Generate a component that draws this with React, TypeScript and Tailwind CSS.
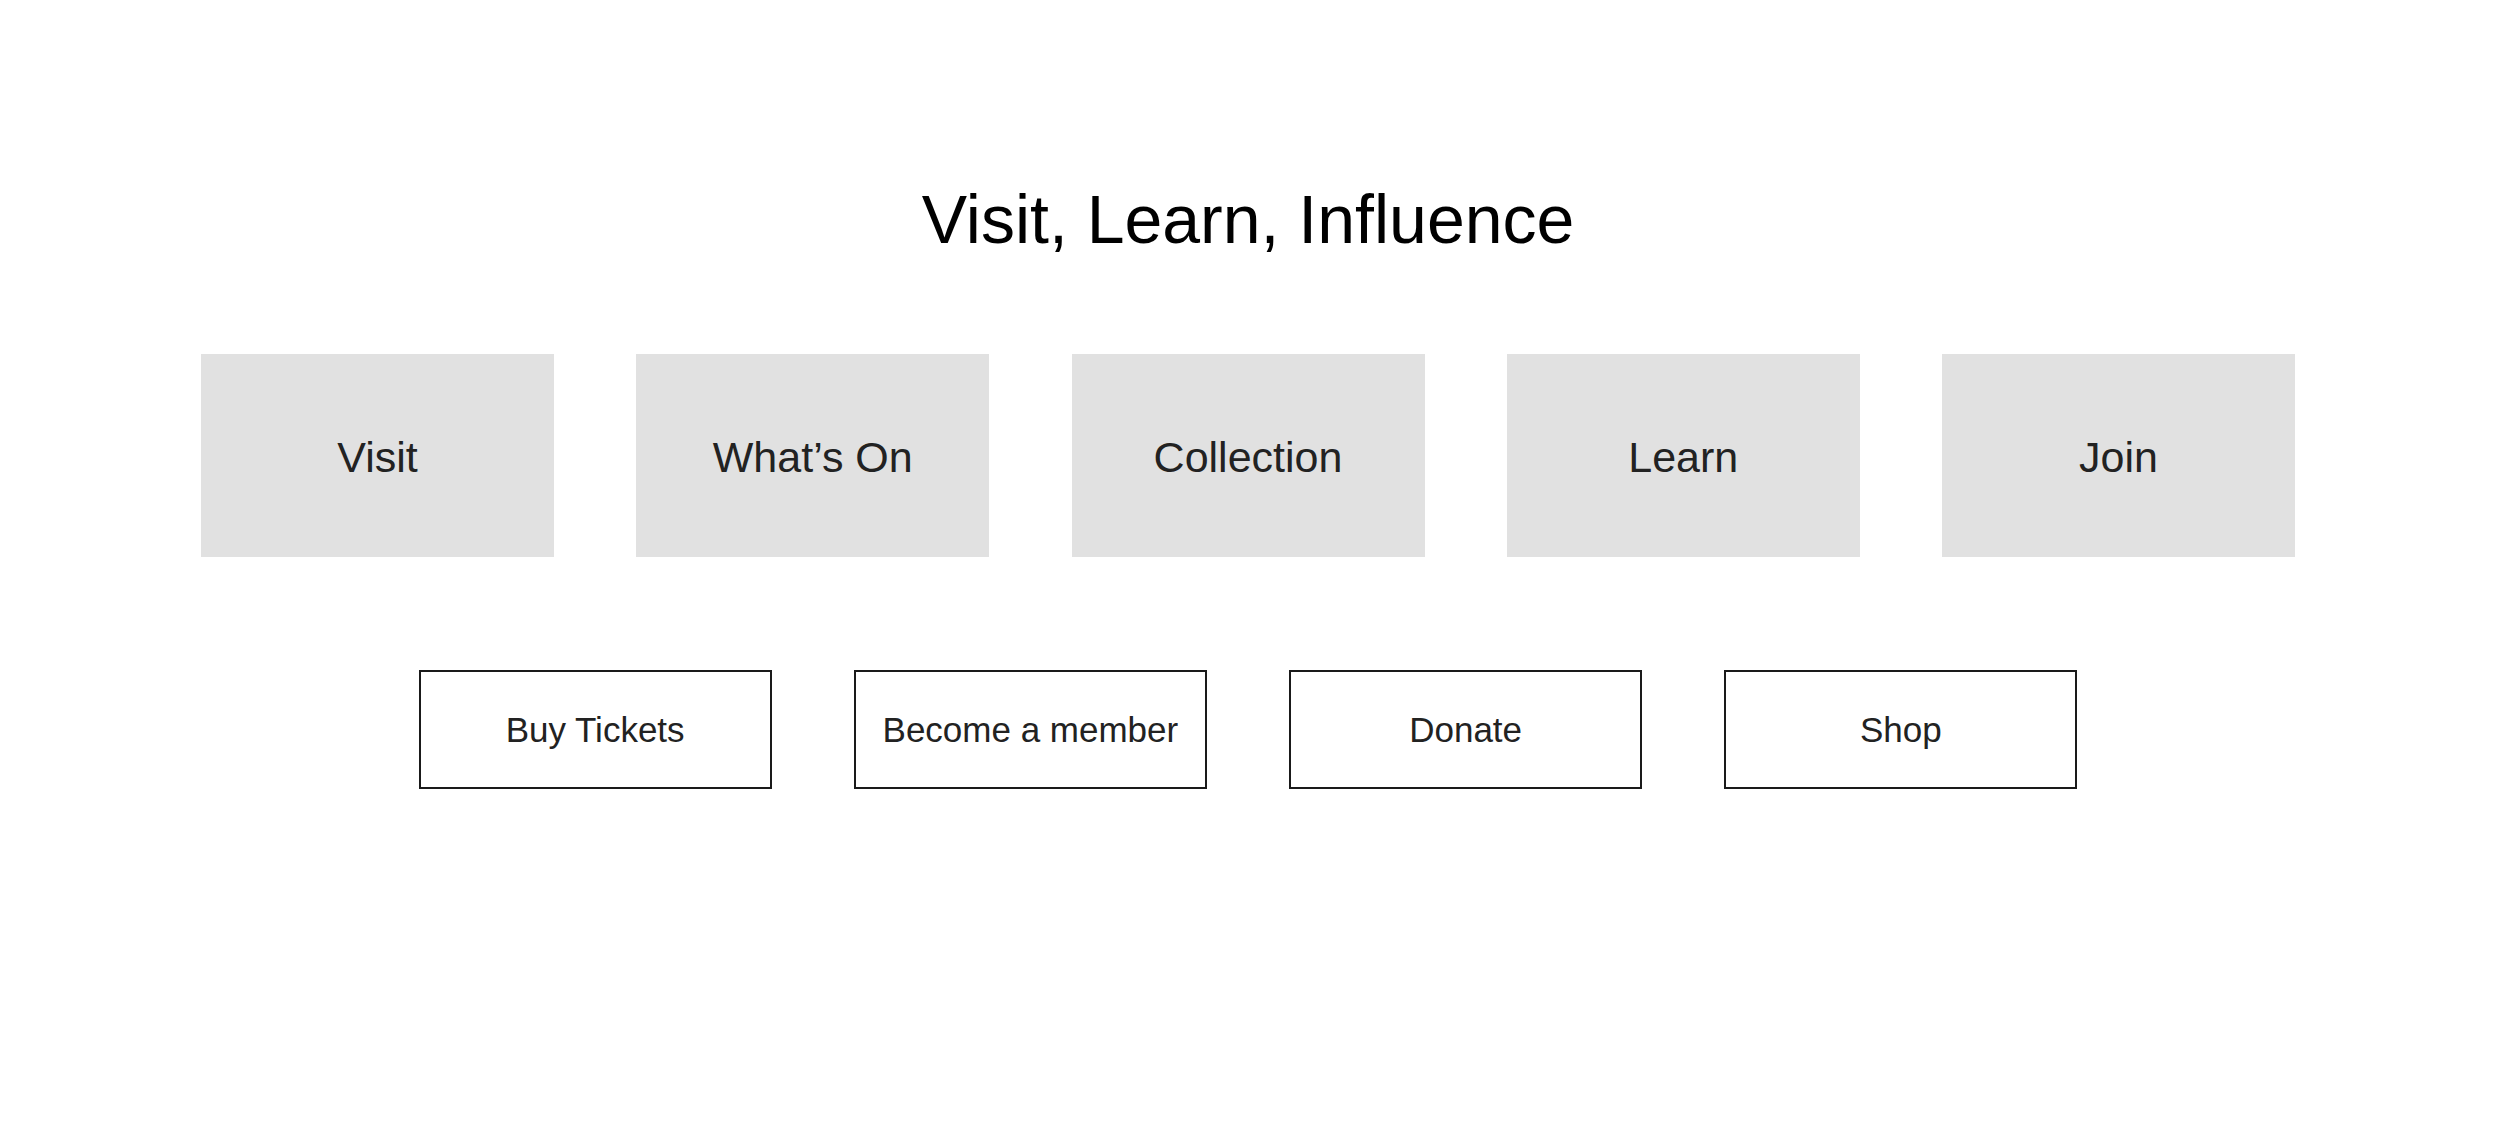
const CARDS = ["Visit", "What’s On", "Collection", "Learn", "Join"];
const ACTIONS = ["Buy Tickets", "Become a member", "Donate", "Shop"];

export default function App() {
  return (
    <main className="min-h-screen bg-white font-['Liberation_Sans',Arial,sans-serif] pt-[185px] pr-[4px]">
      <h1 className="text-center text-[68px] leading-[68px] text-black">
        Visit, Learn, Influence
      </h1>

      <div className="mt-[101px] flex justify-center gap-[82.25px]">
        {CARDS.map((label) => (
          <a
            key={label}
            href="#"
            className="flex h-[203px] w-[353px] items-center justify-center bg-[#e1e1e1] pt-[4px] text-[43px] text-[#222]"
          >
            {label}
          </a>
        ))}
      </div>

      <div className="mt-[113px] flex justify-center gap-[82.25px]">
        {ACTIONS.map((label) => (
          <button
            key={label}
            type="button"
            className="flex h-[119px] w-[353px] items-center justify-center border-[2.5px] border-[#1a1a1a] bg-white pt-[2px] text-[35px] text-[#222]"
          >
            {label}
          </button>
        ))}
      </div>
    </main>
  );
}
